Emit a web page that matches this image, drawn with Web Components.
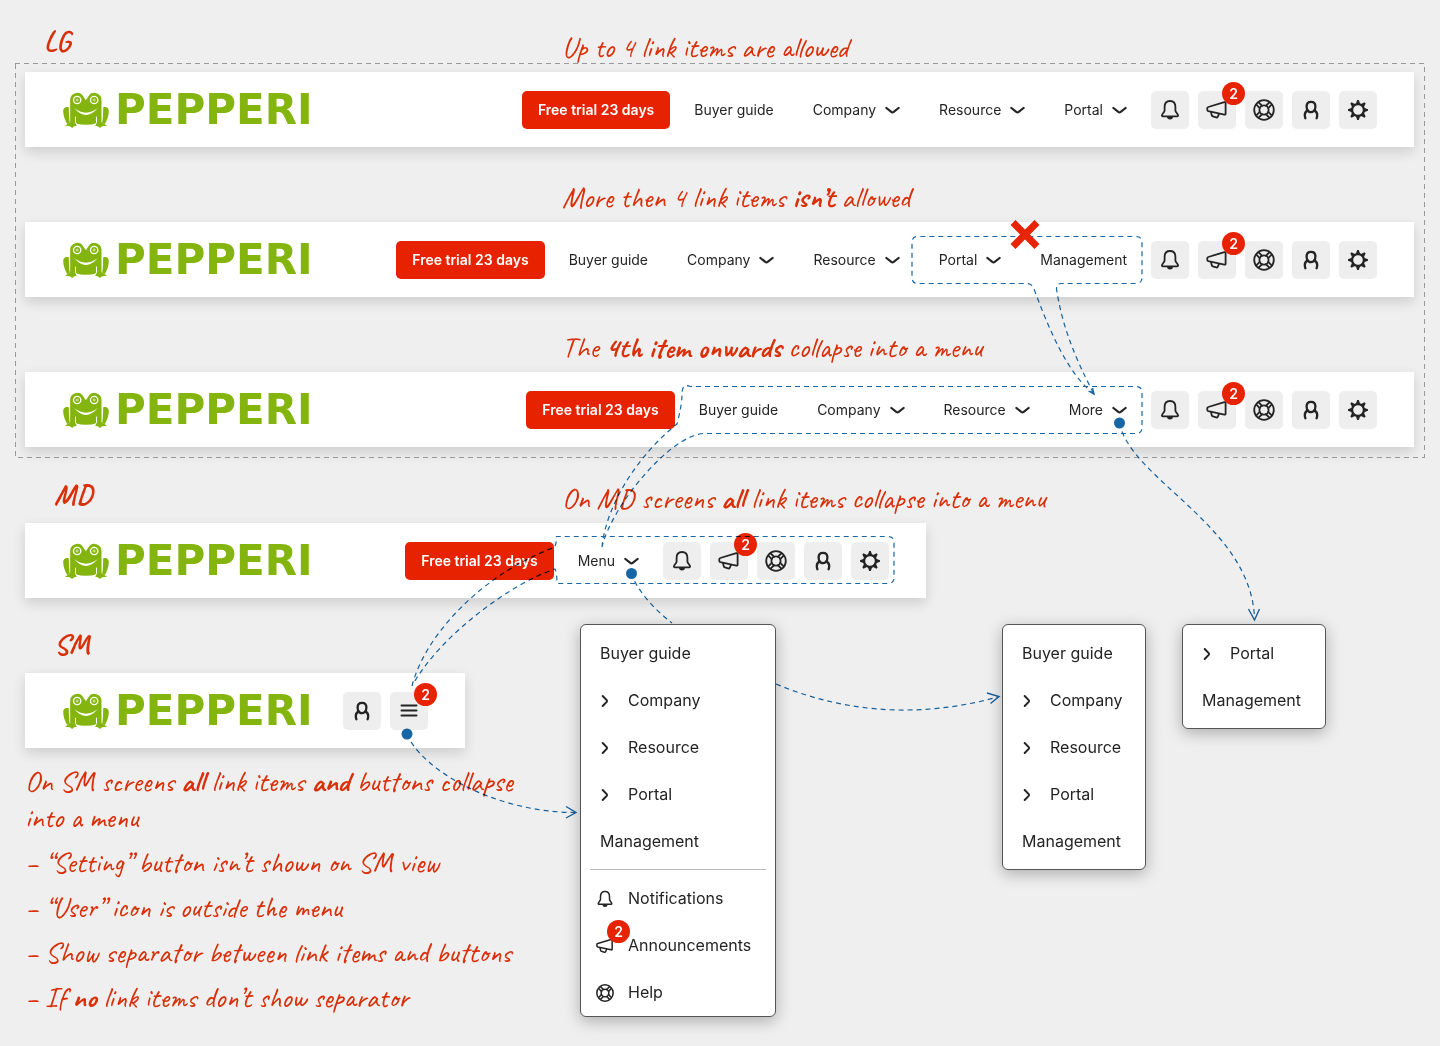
<!DOCTYPE html>
<html lang="en">
<head>
<meta charset="utf-8">
<title>Pepperi header – responsive behaviour</title>
<style>
  body { margin: 0; background: #efefef; color: #242424; font-family: Inter, "Liberation Sans", sans-serif; }
</style>
</head>
<body>
<spec-page></spec-page>

<script>
const define = (name, html) => customElements.define(name, class extends HTMLElement {
  constructor() {
    super();
    const t = document.createElement('template');
    t.innerHTML = html;
    this.attachShadow({ mode: 'open' }).append(t.content.cloneNode(true));
  }
});

const spokes = [45, 135, 225, 315].map(a => `<path d="M23.4 17.4h4.8M23.4 20.6h4.8" transform="rotate(${a} 19 19)"/>`).join('');
const teeth = [0, 45, 90, 135, 180, 225, 270, 315].map(a => `<path d="M16.6 13.6 18.2 9h1.6l1.6 4.6z" fill="currentColor" stroke="none" transform="rotate(${a} 19 19)"/>`).join('');
const ICONS = {
  bell: ['7 7 24 24', '<path d="M19 10c-3.6 0-5.4 2.7-5.4 6v3.4c0 2-2.7 3.2-2.7 5.2 0 .6.3.8.8.8h14.6c.5 0 .8-.2.8-.8 0-2-2.7-3.2-2.7-5.2V16c0-3.3-1.8-6-5.4-6z"/><path d="M16 25.600h6a3 3 0 0 1-6 0z" fill="currentColor" stroke="none"/>'],
  horn: ['7 7 24 24', '<path d="M10.300 16 26.300 11.200c.8-.2 1.300.1 1.300.9v10.600c0 .8-.5 1.100-1.300.9l-16-3.400c-.7-.2-1-.5-1-1.100v-2c0-.6.3-.9 1-1.100z"/><path d="M13 21.200l.8 3.200c.2.600.5.900 1 1l3.400 1c.7.200 1.200 0 1.500-.6l1.200-2.600"/>'],
  help: ['7 7 24 24', `<circle cx="19" cy="19" r="9.800"/><circle cx="19" cy="19" r="4.600"/>${spokes}`],
  user: ['7 7 24 24', '<path stroke-width="2.300" d="M16.300 20.200c-1.200-.9-1.700-3-1.700-4.800 0-2.600 1.500-4.500 4.400-4.500s4.400 1.900 4.400 4.500c0 1.800-.5 3.900-1.700 4.800-1.500 1.100-3.900 1.100-5.400 0z"/><path stroke-width="2.300" d="M15.800 19.400c-1.800.8-3 2.200-3 4.600 0 1.200.2 2.300.6 3.200M22.200 19.400c1.800.8 3 2.200 3 4.600 0 1.200-.2 2.300-.6 3.200"/>'],
  gear: ['7 7 24 24', `<circle cx="19" cy="19" r="5.900" stroke-width="2.200"/>${teeth}`],
  lines: ['7 7 24 24', '<path stroke-width="2" d="M11.500 13.500h15M11.500 18.500h15M11.500 23.500h15"/>'],
  down: ['0 0 15 9', '<path stroke-width="2.200" d="M1.400 2 6.300 5.900q1.200.9 2.400 0L13.600 2"/>'],
  right: ['0 0 18 18', '<path stroke-width="2" d="M6.700 4l4 4.100q.8.900 0 1.800l-4 4.100"/>']
};

customElements.define('spec-icon', class extends HTMLElement {
  connectedCallback() {
    const [box, shape] = ICONS[this.getAttribute('name')];
    this.attachShadow({ mode: 'open' }).innerHTML = `
      <style>:host{display:block;flex:none;width:24px;height:24px}
      :host([name=down]){width:15px;height:9px}
      svg{display:block;width:100%;height:100%}</style>
      <svg viewBox="${box}" aria-hidden="true" fill="none" stroke="currentColor" stroke-width="1.800" stroke-linecap="round" stroke-linejoin="round">${shape}</svg>`;
  }
});

define('count-badge', `
  <style>:host{display:flex;align-items:center;justify-content:center;width:23px;height:23px;border-radius:50%;
    background:#e62200;color:#fff;font-size:14px;line-height:23px;font-weight:600}</style><slot></slot>`);

define('pepperi-logo', `
  <style>
    :host{display:flex;align-items:center;gap:6px;color:#83b50e;height:38px}
    svg{width:46px;height:36px;flex:none}
    b{font:bold 42px/38px "DejaVu Sans",sans-serif}
  </style>
  <svg viewBox="0 0 137 108" aria-hidden="true">
    <g fill="currentColor">
      <path d="M17 46C7 42 0 48 0 57c0 14 6 29 12 39l8-3c-2-12-3-30-3-47zM120 46c10-4 17 2 17 11 0 14-6 29-12 39l-8-3c2-12 3-30 3-47z"/>
      <path d="M21 24A21 21 0 0 1 60 13l6 9q2 3 4 0l6-9A21 21 0 0 1 115 24V94H21z"/>
      <path d="M5 101l17-10h14l5 10-7 2-3 1-4 4-7-5zM132 101l-17-10h-14l-5 10 7 2 3 1 4 4 7-5z"/>
      <path d="M36 78h65v16q-32 9-65 0z"/>
    </g>
    <g fill="none" stroke="#fff">
      <g stroke-width="4"><circle cx="42" cy="24" r="11"/><circle cx="93" cy="24" r="11"/></g>
      <g stroke-width="2"><circle cx="42" cy="24" r="3"/><circle cx="93" cy="24" r="3"/></g>
      <path stroke-width="3" d="M37 74v18l5 6M100 74v18l-5 6"/>
    </g>
    <path fill="#fff" d="M33 48Q68 76 104 48Q68 90 33 48z"/>
  </svg><b>PEPPERI</b>`);

define('trial-button', `
  <style>:host{display:block}
    button{display:block;border:0;border-radius:5px;background:#e62200;color:#fff;height:38px;padding:0 16px;
      font:600 14px/38px Inter,sans-serif;white-space:nowrap}</style>
  <button type="button"><slot></slot></button>`);

customElements.define('nav-item', class extends HTMLElement {
  connectedCallback() {
    const css = `<style>:host{display:block}
      a,button{display:flex;align-items:center;gap:9px;height:38px;padding:0;border:0;background:none;color:inherit;
      font:400 14px/38px Inter,sans-serif;text-decoration:none;white-space:nowrap}</style>`;
    this.attachShadow({ mode: 'open' }).innerHTML = css + (this.hasAttribute('drop')
      ? '<button type="button"><slot></slot><spec-icon name="down"></spec-icon></button>'
      : '<a href="#"><slot></slot></a>');
  }
});

customElements.define('icon-button', class extends HTMLElement {
  connectedCallback() {
    this.attachShadow({ mode: 'open' }).innerHTML = `
      <style>:host{display:block;position:relative}
        button{display:flex;align-items:center;justify-content:center;width:38px;height:38px;padding:0;border:0;
          border-radius:5px;background:#eee;color:inherit}
        ::slotted(count-badge){position:absolute;top:-9px;right:-9px}</style>
      <button type="button" aria-label="${this.getAttribute('label')}"><spec-icon name="${this.getAttribute('icon')}"></spec-icon></button>
      <slot></slot>`;
  }
});

define('tool-icons', `
  <style>:host{display:flex;gap:9px}</style>
  <icon-button icon="bell" label="Notifications"></icon-button>
  <icon-button icon="horn" label="Announcements"><count-badge>2</count-badge></icon-button>
  <icon-button icon="help" label="Help"></icon-button>
  <icon-button icon="user" label="User"></icon-button>
  <icon-button icon="gear" label="Settings"></icon-button>`);

define('header-bar', `
  <style>
    :host{display:flex;justify-content:space-between;background:#fff;padding:19px 37px 18px 38px;
      box-shadow:0 5px 12px rgba(0,0,0,.14)}
    .right,.links{display:flex}
    .right{gap:24px}.links{gap:39px}
  </style>
  <pepperi-logo></pepperi-logo>
  <div class="right"><slot name="cta"></slot><nav class="links"><slot></slot></nav><slot name="tools"></slot></div>`);

define('hand-note', `
  <style>
    :host{display:grid;grid-template-columns:537px 1fr;align-items:end;box-sizing:border-box;
      color:#d9300a;padding-bottom:9px;font:400 29px/30px Caveat,Lato,sans-serif}
    .label{padding:0 0 var(--lift,0) var(--indent,29px);font-size:29px;line-height:38px;font-weight:700}
  </style>
  <div class="label"><slot name="label"></slot></div><div><slot></slot></div>`);

define('size-frame', `
  <style>:host{display:block;position:relative;padding:9px 10px 10px}
    svg{position:absolute;inset:0;width:100%;height:100%;overflow:visible;pointer-events:none}</style>
  <svg aria-hidden="true"><rect width="100%" height="100%" fill="none" stroke="#999" stroke-dasharray="5 4" shape-rendering="crispEdges"/></svg>
  <slot></slot>`);

define('hand-list', `
  <style>:host{display:flex;flex-direction:column;gap:9px;color:#d9300a;
    font:400 29px/36px Caveat,Lato,sans-serif}
    ::slotted(p){margin:0}</style><slot></slot>`);

define('menu-card', `
  <style>:host{display:block;box-sizing:border-box;background:#fff;border:1px solid #555;border-radius:6px;
    padding:5px 19px var(--end,4px);box-shadow:0 4px 16px rgba(0,0,0,.28);position:relative;z-index:1}
    ::slotted(hr){border:0;border-top:1px solid #bbb;margin:4px -10px 5px}</style><slot></slot>`);

customElements.define('menu-row', class extends HTMLElement {
  connectedCallback() {
    const icon = this.getAttribute('icon');
    this.attachShadow({ mode: 'open' }).innerHTML = `
      <style>:host{display:block;position:relative}
        a,button{display:flex;align-items:center;gap:13px;height:47px;padding:0;border:0;background:none;color:inherit;
          font:400 16px/47px Inter,sans-serif;text-decoration:none;white-space:nowrap}
        spec-icon{width:20px;height:20px;margin-left:-5px}
        spec-icon[name=right]{width:18px;height:18px;margin:0 1px 0 -4px}
        ::slotted(count-badge){position:absolute;top:-2px;left:7px}</style>
      ${icon ? `<button type="button"><spec-icon name="${icon}"></spec-icon><span><slot></slot></span></button>`
             : '<a href="#"><slot></slot></a>'}<slot name="badge"></slot>`;
  }
});

define('flow-lines', `
  <style>:host{position:absolute;left:0;top:0;width:1440px;height:1046px;pointer-events:none;z-index:2;mix-blend-mode:multiply}
    svg{display:block}</style>
  <svg width="1440" height="1046" viewBox="0 0 1440 1046" aria-hidden="true" fill="none" stroke="#1766a6" stroke-width="1.200">
    <g stroke-dasharray="5 4">
      <path d="M1094 394C1068 374 1050 332 1034 289Q1032 283.500 1027 283.500H918Q912 283.500 912 277.500V242.500Q912 236.500 918 236.500H1136Q1142 236.500 1142 242.500V277.500Q1142 283.500 1136 283.500H1061Q1056.500 283.500 1056.500 289C1062 325 1074 356 1094 394"/>
      <path d="M602 547C606 505 638 455 677 424Q682 405 682 394T690 386.500H1136Q1142 386.500 1142 392.500V427.500Q1142 433.500 1136 433.500H703C670 436 612 505 602 547"/>
      <path d="M412 686C424 638 478 576 555 547Q556.500 542 556.500 536.500H888Q894 536.500 894 542.500V577.500Q894 583.500 888 583.500H557Q557 573 555 569C512 583 440 635 412 686"/>
      <path d="M1119.500 423C1131 480 1251 526 1254.500 618"/>
      <path d="M631 573C638 592 655 610 672 623M776 684C850 715 925 717 998 697"/>
      <path d="M407 734C420 767 490 812 575 812.500"/>
    </g>
    <path stroke-width="1.400" d="M1248.500 609l6 11 5-11M987 693l12 3.500-8.500 7M566 806.500l10 6-10 5.500M1088.500 391l5.500 3-1.500-6"/>
    <g fill="#1766a6" stroke="none"><circle cx="1119.500" cy="423" r="5.500"/><circle cx="631.500" cy="573.500" r="5.500"/><circle cx="407" cy="734" r="5.500"/></g>
    <path stroke="#e82404" stroke-width="7" d="M1013 222.500l24 24M1037 222.500l-24 24"/>
  </svg>`);

define('spec-page', `
  <style>
    :host{display:block;position:relative;padding:0 16px 28px 15px}
    .top{--indent:19px;--lift:3px;min-height:63px;padding:0 0 0 10px}
    .gap{min-height:75px}
    .mdhead{min-height:66px;padding-left:10px}
    .md{margin-left:10px;max-width:901px;box-sizing:border-box}
    .lower{display:grid;grid-template-columns:555px auto auto auto;justify-content:start;align-items:start;padding-left:10px}
    .sm{width:440px;box-sizing:border-box}
    .tools{display:flex;gap:9px}
    hand-list{padding:16px 40px 0 0}
    menu-card{margin-top:26px}
    .full{--end:0px;width:196px}
    .links{width:144px;margin-left:226px}
    .more{width:144px;margin-left:36px}
  </style>
  <hand-note class="top"><span slot="label">LG</span>Up to 4 link items are allowed</hand-note>
  <size-frame>
    <header-bar>
      <trial-button slot="cta">Free trial 23 days</trial-button>
      <nav-item>Buyer guide</nav-item><nav-item drop>Company</nav-item><nav-item drop>Resource</nav-item><nav-item drop>Portal</nav-item>
      <tool-icons slot="tools"></tool-icons>
    </header-bar>
    <hand-note class="gap"><span>More then 4 link items <b>isn’t</b> allowed</span></hand-note>
    <header-bar>
      <trial-button slot="cta">Free trial 23 days</trial-button>
      <nav-item>Buyer guide</nav-item><nav-item drop>Company</nav-item><nav-item drop>Resource</nav-item><nav-item drop>Portal</nav-item><nav-item>Management</nav-item>
      <tool-icons slot="tools"></tool-icons>
    </header-bar>
    <hand-note class="gap"><span>The <b>4th item onwards</b> collapse into a menu</span></hand-note>
    <header-bar>
      <trial-button slot="cta">Free trial 23 days</trial-button>
      <nav-item>Buyer guide</nav-item><nav-item drop>Company</nav-item><nav-item drop>Resource</nav-item><nav-item drop>More</nav-item>
      <tool-icons slot="tools"></tool-icons>
    </header-bar>
  </size-frame>
  <hand-note class="mdhead"><span slot="label">MD</span><span>On MD screens <b>all</b> link items collapse into a menu</span></hand-note>
  <header-bar class="md">
    <trial-button slot="cta">Free trial 23 days</trial-button>
    <nav-item drop>Menu</nav-item>
    <tool-icons slot="tools"></tool-icons>
  </header-bar>
  <div class="lower">
    <section>
      <hand-note class="gap"><span slot="label">SM</span></hand-note>
      <header-bar class="sm">
        <div class="tools" slot="tools">
          <icon-button icon="user" label="User"></icon-button>
          <icon-button icon="lines" label="Menu"><count-badge>2</count-badge></icon-button>
        </div>
      </header-bar>
      <hand-list>
        <p>On SM screens <b>all</b> link items <b>and</b> buttons collapse <span>into a menu</span></p>
        <p>– “Setting” button isn’t shown on SM view</p>
        <p>– “User” icon is outside the menu</p>
        <p>– Show separator between link items and buttons</p>
        <p>– If <b>no</b> link items don’t show separator</p>
      </hand-list>
    </section>
    <menu-card class="full">
      <menu-row>Buyer guide</menu-row><menu-row icon="right">Company</menu-row><menu-row icon="right">Resource</menu-row><menu-row icon="right">Portal</menu-row><menu-row>Management</menu-row>
      <hr>
      <menu-row icon="bell">Notifications</menu-row><menu-row icon="horn">Announcements<count-badge slot="badge">2</count-badge></menu-row><menu-row icon="help">Help</menu-row>
    </menu-card>
    <menu-card class="links">
      <menu-row>Buyer guide</menu-row><menu-row icon="right">Company</menu-row><menu-row icon="right">Resource</menu-row><menu-row icon="right">Portal</menu-row><menu-row>Management</menu-row>
    </menu-card>
    <menu-card class="more">
      <menu-row icon="right">Portal</menu-row><menu-row>Management</menu-row>
    </menu-card>
  </div>
  <flow-lines></flow-lines>`);
</script>
</body>
</html>
